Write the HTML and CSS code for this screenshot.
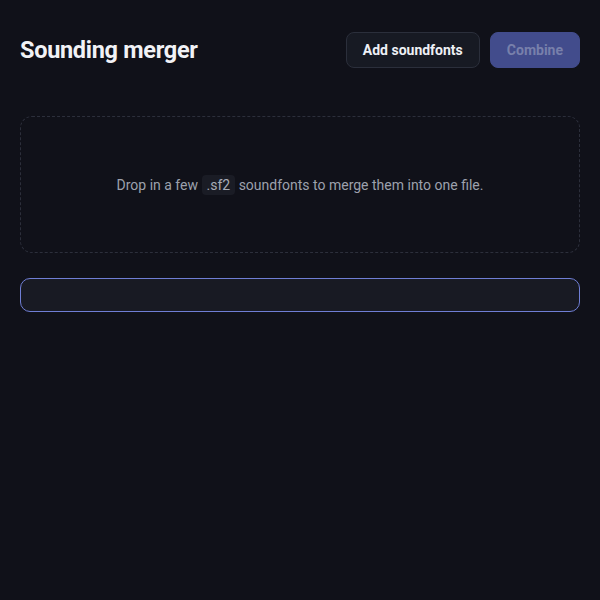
FILE: index.html
```html
<!DOCTYPE html>
<html>
<head>
<meta charset="utf-8">
<link rel="stylesheet" href="styles.css">
</head>
<body>
<div class="app">
  <header class="top">
    <h1 class="title">Sounding merger</h1>
    <div class="actions">
      <button class="btn btn-secondary">Add soundfonts</button>
      <button class="btn btn-primary" disabled>Combine</button>
    </div>
  </header>
  <section class="drop">
    <p class="drop-text">Drop in a few <code class="ext">.sf2</code> soundfonts to merge them into one file.</p>
  </section>
  <div class="field"></div>
</div>
</body>
</html>
```
FILE: styles.css
```css
html, body {
  margin: 0;
  height: 100%;
  background: #101119;
}
body {
  font-family: Roboto, "Noto Sans", sans-serif;
  color: #e9ebf2;
}
.app {
  padding: 32px 20px;
}
.top {
  display: flex;
  align-items: center;
  justify-content: space-between;
  height: 36px;
}
.title {
  margin: 0;
  font-size: 23.5px;
  font-weight: 700;
  color: #f1f2f6;
  letter-spacing: -0.3px;
}
.actions {
  display: flex;
  gap: 10px;
}
.btn {
  height: 36px;
  border-radius: 8px;
  font-family: inherit;
  font-size: 14px;
  font-weight: 700;
  padding: 0 16px;
}
.btn-secondary {
  background: #171a23;
  border: 1px solid #2b2f3b;
  color: #eef0f5;
}
.btn-primary {
  background: #424c8c;
  border: 1px solid #424c8c;
  color: #7880ab;
}
.drop {
  margin-top: 48px;
  height: 137px;
  box-sizing: border-box;
  border: 1px dashed #2c2f3b;
  border-radius: 12px;
  display: flex;
  align-items: center;
  justify-content: center;
}
.drop-text {
  margin: 0;
  font-size: 14px;
  color: #9da1ad;
}
.ext {
  font-family: Roboto, "Noto Sans", sans-serif;
  font-size: 14px;
  background: #1a1c25;
  color: #a8acb8;
  padding: 2px 5px;
  border-radius: 4px;
}
.field {
  margin-top: 25px;
  height: 34px;
  box-sizing: border-box;
  border: 1px solid #6f7ed4;
  border-radius: 10px;
  background: #181a23;
}
```
